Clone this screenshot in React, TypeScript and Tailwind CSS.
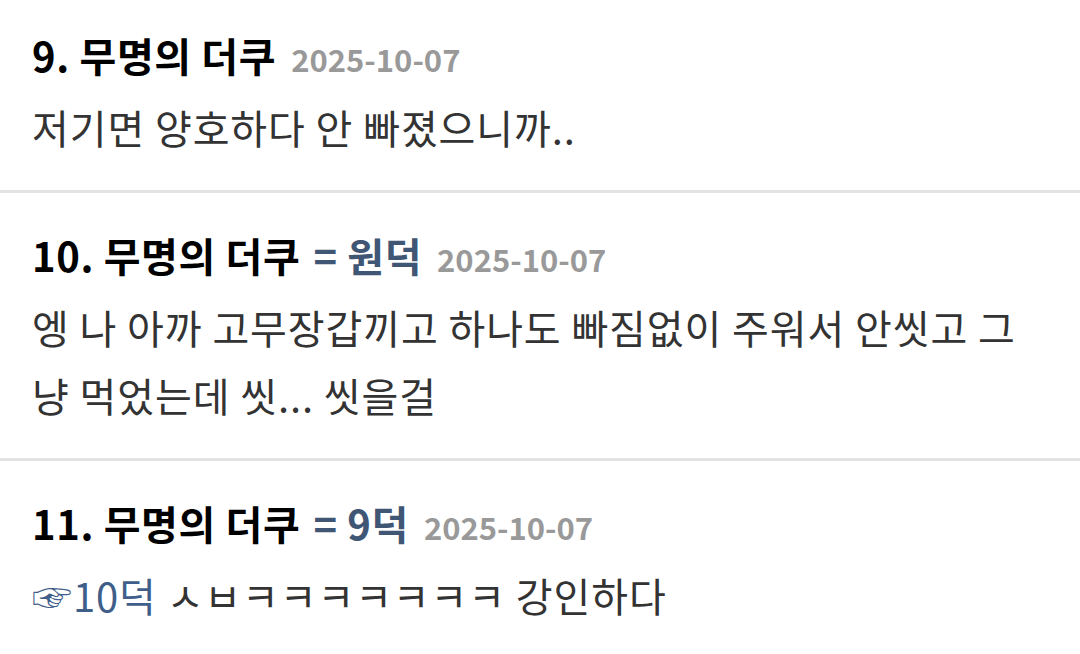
import React from "react";

const font = "font-['Noto_Sans_CJK_KR','Noto_Sans',sans-serif]";

function Item({
  num,
  tag,
  date,
  children,
  first,
}: {
  num: string;
  tag?: string;
  date: string;
  children: React.ReactNode;
  first?: boolean;
}) {
  return (
    <div className={`${first ? "pt-[27px]" : "pt-[34px]"} pb-[29px] pl-[32px] pr-[40px] border-b-[3px] border-[#e3e3e3]`}>
      <div className="flex items-baseline h-[56px] leading-[56px] whitespace-nowrap">
        <span className="text-[40px] font-bold text-black tracking-[0.6px]">{num}. 무명의 더쿠</span>
        {tag && <span className="ml-[13px] text-[40px] font-bold text-[#3f5675] tracking-[0.6px]">= {tag}</span>}
        <span className="ml-[15px] text-[31px] font-bold text-[#999999]">{date}</span>
      </div>
      <div className="mt-[10px] text-[40px] leading-[68px] text-[#333333] tracking-[0.9px]">{children}</div>
    </div>
  );
}

export default function App() {
  return (
    <div className={`w-[1080px] h-[654px] overflow-hidden bg-white ${font}`}>
      <Item num="9" date="2025-10-07" first>
        저기면 양호하다 안 빠졌으니까..
      </Item>
      <Item num="10" tag="원덕" date="2025-10-07">
        엥 나 아까 고무장갑끼고 하나도 빠짐없이 주워서 안씻고 그냥 먹었는데 씻... 씻을걸
      </Item>
      <Item num="11" tag="9덕" date="2025-10-07">
        <span className="text-[#3f5f8a]">☞10덕</span> ㅅㅂㅋㅋㅋㅋㅋㅋㅋ 강인하다
      </Item>
    </div>
  );
}
